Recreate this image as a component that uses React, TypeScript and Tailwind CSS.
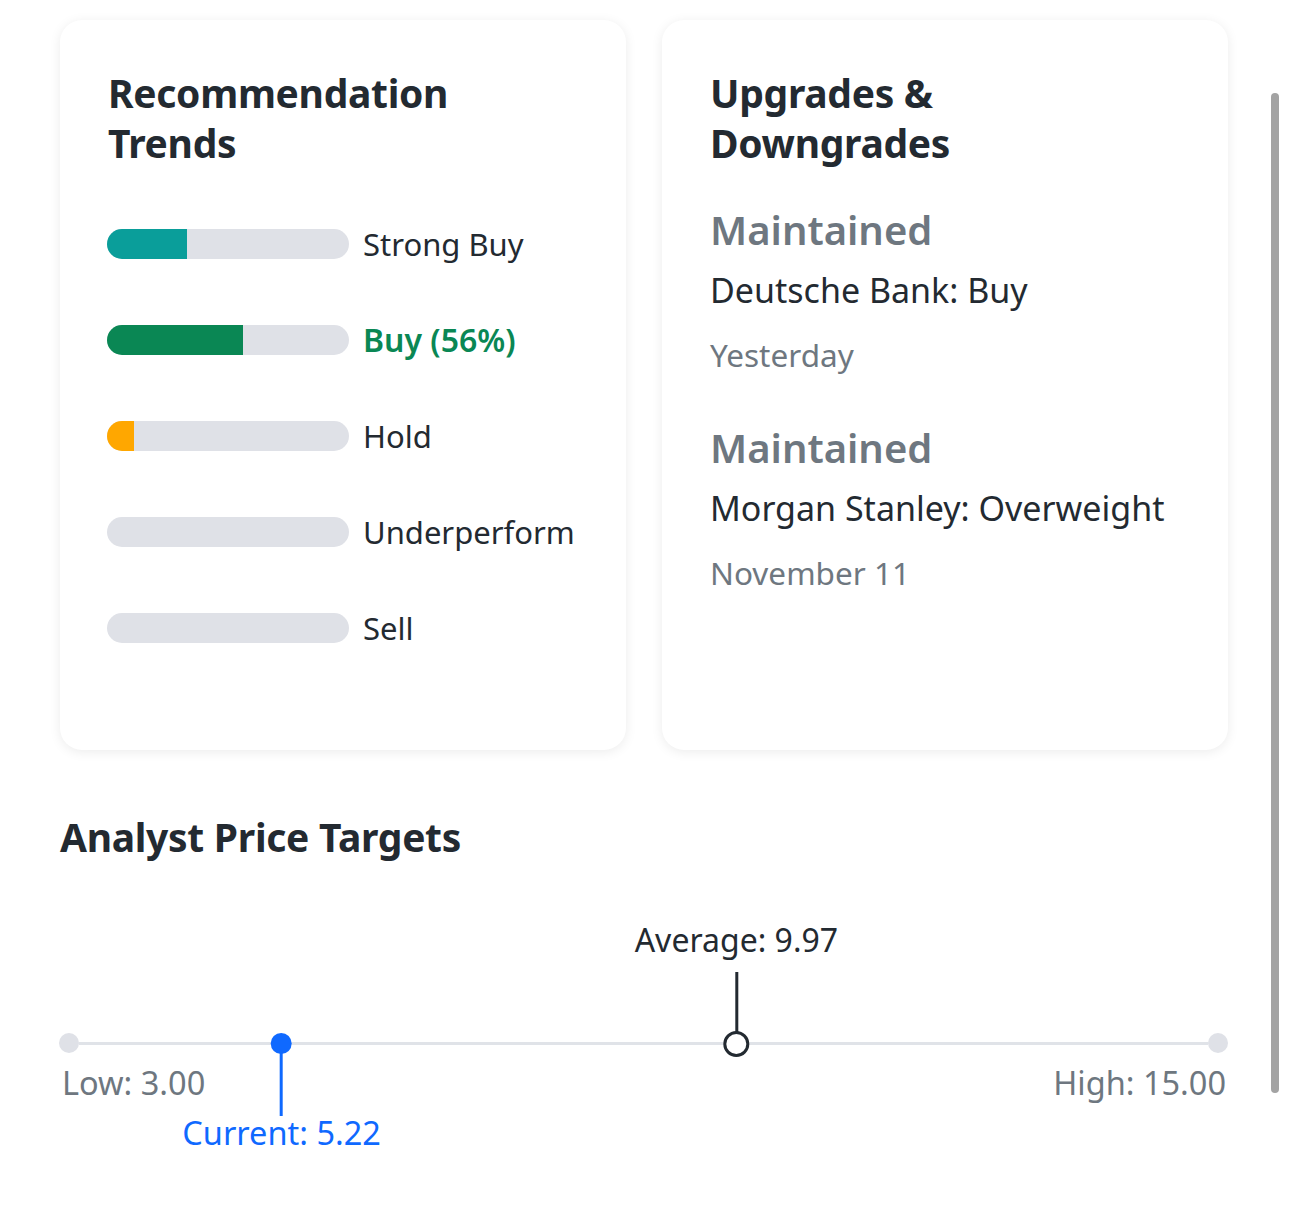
import React from 'react';

const font = { fontFamily: '"Noto Sans", "Open Sans", sans-serif' };

const trends = [
  { name: 'Strong Buy', pct: 33, color: 'bg-[#0a9e9a]', active: false },
  { name: 'Buy (56%)', pct: 56, color: 'bg-[#0a8754]', active: true },
  { name: 'Hold', pct: 11, color: 'bg-[#ffa700]', active: false },
  { name: 'Underperform', pct: 0, color: 'bg-[#0a9e9a]', active: false },
  { name: 'Sell', pct: 0, color: 'bg-[#0a9e9a]', active: false },
];

const ratings = [
  { action: 'Maintained', firm: 'Deutsche Bank: Buy', date: 'Yesterday' },
  { action: 'Maintained', firm: 'Morgan Stanley: Overweight', date: 'November 11' },
];

const low = 3;
const high = 15;
const current = 5.22;
const average = 9.97;

// track runs from x=9 to x=1158 inside the chart box
const pos = (v: number) => 9 + ((v - low) / (high - low)) * 1149;

const Card = ({ children }: { children: React.ReactNode }) => (
  <div className="h-[730px] rounded-[22px] bg-white shadow-[0_2px_12px_rgba(0,0,0,0.08)] px-[48px] pt-[48px]">
    {children}
  </div>
);

const App = () => {
  return (
    <div className="relative w-full min-h-[1210px] bg-white text-[#232a31]" style={font}>
      <div className="px-[60px] pt-[20px] w-[1289px]">
        {/* Cards */}
        <div className="grid grid-cols-2 gap-[36px] w-[1168px]">
          <Card>
            <h2 className="text-[39px] font-bold leading-[50px] tracking-[-0.3px]">
              Recommendation
              <br />
              Trends
            </h2>
            <div className="mt-[61px] flex flex-col gap-[66px]">
              {trends.map((t) => (
                <div key={t.name} className="flex items-center h-[30px]">
                  <div className="w-[242px] h-[30px] -ml-px rounded-full bg-[#dfe1e7] overflow-hidden flex">
                    {t.pct > 0 && (
                      <div className={`h-full ${t.color}`} style={{ width: `${t.pct}%` }} />
                    )}
                  </div>
                  <span
                    className={`ml-[14px] leading-none ${
                      t.active ? 'text-[32px] text-[#0a8754] font-semibold' : 'text-[31px] text-[#232a31]'
                    }`}
                  >
                    {t.name}
                  </span>
                </div>
              ))}
            </div>
          </Card>

          <Card>
            <h2 className="text-[39px] font-bold leading-[50px] tracking-[-0.3px]">
              Upgrades &amp;
              <br />
              Downgrades
            </h2>
            <div className="mt-[34px] flex flex-col gap-[32px]">
              {ratings.map((r, i) => (
                <div key={i} className="flex flex-col">
                  <span className="text-[40px] font-semibold leading-[56px] text-[#6e7780]">
                    {r.action}
                  </span>
                  <span className="text-[34px] leading-[64px] text-[#232a31]">{r.firm}</span>
                  <span className="text-[31.5px] leading-[66px] text-[#6e7780]">{r.date}</span>
                </div>
              ))}
            </div>
          </Card>
        </div>

        {/* Analyst Price Targets */}
        <h2 className="mt-[62px] text-[39px] font-bold leading-[50px] tracking-[-0.3px]">
          Analyst Price Targets
        </h2>

        <div className="relative w-[1168px] mt-[38px] pt-[133px] pb-[40px]">
          {/* track with low / high ends */}
          <div className="flex items-center -ml-px">
            <div className="w-[20px] h-[20px] rounded-full bg-[#dfe1e7]" />
            <div className="flex-1 h-[3px] bg-[#e0e3e8]" />
            <div className="w-[20px] h-[20px] rounded-full bg-[#dfe1e7]" />
          </div>
          <div className="flex justify-between px-[2px] mt-[10px] text-[32.5px] leading-[40px] text-[#6e7780]">
            <span>Low: {low.toFixed(2)}</span>
            <span>High: {high.toFixed(2)}</span>
          </div>

          {/* average marker */}
          <div
            className="absolute top-[0px] -translate-x-1/2 flex flex-col items-center"
            style={{ left: pos(average) }}
          >
            <span className="text-[32px] leading-[40px] whitespace-nowrap text-[#232a31] mt-[20px]">
              Average: {average.toFixed(2)}
            </span>
            <div className="w-[3px] h-[60px] mt-[12px] bg-[#232a31]" />
            <div className="w-[26px] h-[26px] -mt-px rounded-full border-[3px] border-[#232a31] bg-white" />
          </div>

          {/* current marker */}
          <div
            className="absolute top-[133px] -translate-x-1/2 flex flex-col items-center"
            style={{ left: pos(current) }}
          >
            <div className="w-[21px] h-[21px] rounded-full bg-[#0f69ff]" />
            <div className="w-[3px] h-[64px] -mt-[2px] bg-[#0f69ff]" />
            <span className="text-[32.5px] leading-[40px] whitespace-nowrap text-[#0f69ff] -mt-[3px]">
              Current: {current.toFixed(2)}
            </span>
          </div>
        </div>
      </div>

      {/* scrollbar overlay */}
      <div className="absolute left-[1271px] top-[93px] w-[8px] h-[1000px] rounded-full bg-[#a3a3a3]" />
    </div>
  );
};

export default App;
